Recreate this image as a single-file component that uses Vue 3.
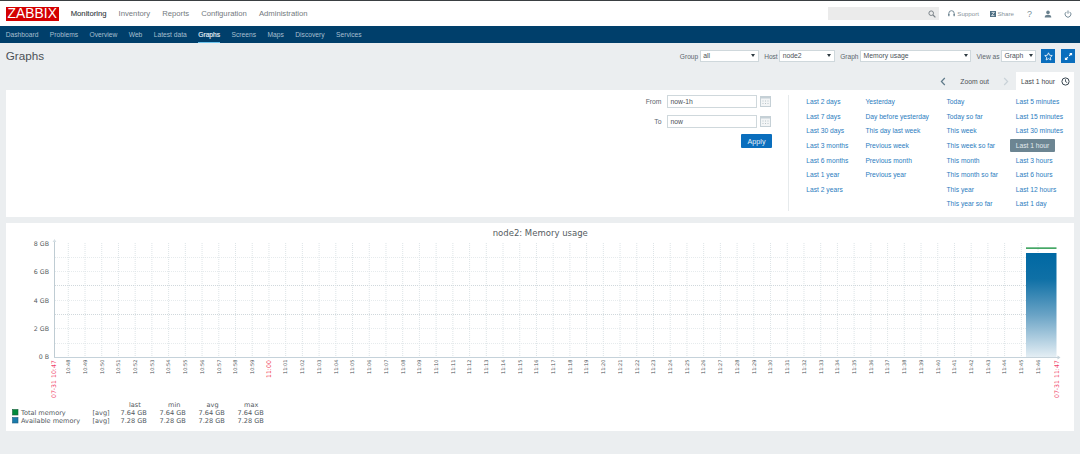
<script setup>
const mainNav = ['Monitoring', 'Inventory', 'Reports', 'Configuration', 'Administration']
const subNav = ['Dashboard', 'Problems', 'Overview', 'Web', 'Latest data', 'Graphs', 'Screens', 'Maps', 'Discovery', 'Services']
const linkCols = [
  ['Last 2 days', 'Last 7 days', 'Last 30 days', 'Last 3 months', 'Last 6 months', 'Last 1 year', 'Last 2 years'],
  ['Yesterday', 'Day before yesterday', 'This day last week', 'Previous week', 'Previous month', 'Previous year'],
  ['Today', 'Today so far', 'This week', 'This week so far', 'This month', 'This month so far', 'This year', 'This year so far'],
  ['Last 5 minutes', 'Last 15 minutes', 'Last 30 minutes', 'Last 1 hour', 'Last 3 hours', 'Last 6 hours', 'Last 12 hours', 'Last 1 day']
]
const pad = n => String(n).padStart(2, '0')
const ticks = []
for (let m = 48; m <= 106; m++) {
  const h = 10 + Math.floor(m / 60)
  ticks.push({ x: 68.3 + (m - 48) * 16.72, label: `${h}:${pad(m % 60)}`, red: m === 60 })
}
const hLines = [
  { y: 257.5, dark: false }, { y: 271.5, dark: false }, { y: 285.5, dark: true },
  { y: 300.5, dark: false }, { y: 314.5, dark: true }, { y: 328.5, dark: false }, { y: 343.5, dark: false }
]
const yLabels = [
  { y: 245.5, t: '8 GB' }, { y: 274, t: '6 GB' }, { y: 302.5, t: '4 GB' }, { y: 330.5, t: '2 GB' }, { y: 359, t: '0 B' }
]
const statCols = [
  { x: 120.5, head: 'last', hx: 129, a: '7.64 GB', b: '7.28 GB' },
  { x: 159.5, head: 'min', hx: 168, a: '7.64 GB', b: '7.28 GB' },
  { x: 198.5, head: 'avg', hx: 206.5, a: '7.64 GB', b: '7.28 GB' },
  { x: 237.5, head: 'max', hx: 244, a: '7.64 GB', b: '7.28 GB' }
]
</script>

<template>
  <div class="page">
    <header class="top">
      <div class="logo">ZABBIX</div>
      <nav class="main-nav">
        <a v-for="(n, i) in mainNav" :key="n" :class="{ on: i === 0 }">{{ n }}</a>
      </nav>
      <div class="tools">
        <div class="search">
          <svg width="8" height="8" viewBox="0 0 8 8"><circle cx="3.2" cy="3.2" r="2.3" fill="none" stroke="#7b8389" stroke-width="1"/><path d="M5 5l2.4 2.4" stroke="#7b8389" stroke-width="1.2"/></svg>
        </div>
        <a class="tool support">
          <svg width="7" height="8" viewBox="0 0 7 8"><path d="M.8 5V3.4a2.7 2.7 0 0 1 5.4 0V5" fill="none" stroke="#69808d" stroke-width=".9"/><rect x=".2" y="3.9" width="1.3" height="2.3" fill="#69808d"/><rect x="5.5" y="3.9" width="1.3" height="2.3" fill="#69808d"/></svg>
          Support
        </a>
        <a class="tool share">
          <svg width="6" height="6" viewBox="0 0 6 6"><rect width="6" height="6" fill="#4f6f83"/><path d="M1.6 1.4h2.8L1.6 4.6h2.8" fill="none" stroke="#fff" stroke-width=".7"/></svg>
          Share
        </a>
        <span class="help">?</span>
        <svg class="user" width="8" height="8" viewBox="0 0 8 8"><circle cx="4" cy="2.4" r="1.8" fill="#69808d"/><path d="M.7 7.4c0-2 1.5-2.6 3.3-2.6s3.3.6 3.3 2.6z" fill="#69808d"/></svg>
        <svg class="power" width="8" height="8" viewBox="0 0 8 8"><path d="M2.3 1.9a2.9 2.9 0 1 0 3.4 0" fill="none" stroke="#69808d" stroke-width=".9"/><path d="M4 .5v3.2" stroke="#69808d" stroke-width=".9"/></svg>
      </div>
    </header>

    <nav class="sub-nav">
      <a v-for="n in subNav" :key="n" :class="{ on: n === 'Graphs' }">{{ n }}</a>
    </nav>

    <main class="content">
      <div class="title-row">
        <h1>Graphs</h1>
        <div class="controls">
          <label>Group</label><div class="sel w-group">all</div>
          <label>Host</label><div class="sel w-host">node2</div>
          <label>Graph</label><div class="sel w-graph">Memory usage</div>
          <label>View as</label><div class="sel w-view">Graph</div>
          <button class="icon-btn star">
            <svg width="9" height="9" viewBox="0 0 10 10"><path d="M5 .9l1.25 2.7 2.95.35-2.2 2 .6 2.9L5 7.4 2.4 8.85l.6-2.9-2.2-2 2.95-.35z" fill="none" stroke="#fff" stroke-width=".9"/></svg>
          </button>
          <button class="icon-btn expand">
            <svg width="9" height="9" viewBox="0 0 10 10"><path d="M5.8 1h3.2v3.2L7.900 3.100 6.300 4.700 5.300 3.700 6.900 2.100zM4.200 9H1V5.800l1.100 1.100 1.600-1.600 1 1-1.600 1.600z" fill="#fff"/></svg>
          </button>
        </div>
      </div>

      <div class="time-row">
        <svg class="chev" width="6" height="9" viewBox="0 0 6 9"><path d="M4.8 1L1.4 4.5l3.4 3.5" fill="none" stroke="#5f7a8a" stroke-width="1.2"/></svg>
        <span class="zoom-out">Zoom out</span>
        <svg class="chev next" width="6" height="9" viewBox="0 0 6 9"><path d="M1.2 1l3.4 3.5L1.2 8" fill="none" stroke="#c9d2d8" stroke-width="1.2"/></svg>
        <div class="time-tab">
          <span>Last 1 hour</span>
          <svg width="9" height="9" viewBox="0 0 9 9"><circle cx="4.5" cy="4.5" r="3.6" fill="none" stroke="#384650" stroke-width="1"/><path d="M4.5 2.3v2.3l1.7 1" fill="none" stroke="#384650" stroke-width=".9"/></svg>
        </div>
      </div>

      <section class="filter">
        <form class="range" @submit.prevent>
          <div class="range-row">
            <label>From</label><div class="txt">now-1h</div>
            <svg class="cal" width="11" height="11" viewBox="0 0 11 11"><rect x=".5" y=".5" width="10" height="10" fill="#f3f5f6" stroke="#c5d0d6"/><rect x=".5" y=".5" width="10" height="2" fill="#c5d0d6"/><path d="M2.5 5h1M5 5h1M7.500 5h1M2.500 7.500h1M5 7.500h1M7.500 7.500h1" stroke="#a9b7bf" stroke-width=".8"/></svg>
          </div>
          <div class="range-row second">
            <label>To</label><div class="txt">now</div>
            <svg class="cal" width="11" height="11" viewBox="0 0 11 11"><rect x=".5" y=".5" width="10" height="10" fill="#f3f5f6" stroke="#c5d0d6"/><rect x=".5" y=".5" width="10" height="2" fill="#c5d0d6"/><path d="M2.5 5h1M5 5h1M7.500 5h1M2.500 7.500h1M5 7.500h1M7.500 7.500h1" stroke="#a9b7bf" stroke-width=".8"/></svg>
          </div>
          <button class="apply">Apply</button>
        </form>
        <div class="links">
          <ul v-for="(col, i) in linkCols" :key="i" :class="'c' + i">
            <li v-for="l in col" :key="l"><a :class="{ sel1: l === 'Last 1 hour' }">{{ l }}</a></li>
          </ul>
        </div>
      </section>

      <section class="graph">
        <svg class="chart" width="1068" height="208" viewBox="6 223 1068 208">
          <defs>
            <linearGradient id="area" x1="0" y1="0" x2="0" y2="1">
              <stop offset="0" stop-color="#0068a3"/>
              <stop offset=".25" stop-color="#0f70a6"/>
              <stop offset=".6" stop-color="#6ba4c6"/>
              <stop offset="1" stop-color="#e4eef4"/>
            </linearGradient>
          </defs>
          <text class="g-title" x="492.700" y="236">node2: Memory usage</text>

          <line v-for="h in hLines" :key="h.y" x1="55" x2="1056" :y1="h.y" :y2="h.y" :stroke="h.dark ? '#d0d8dc' : '#e6ebed'" stroke-width="1" stroke-dasharray="1 1"/>
          <line v-for="t in ticks" :key="'v' + t.x" :x1="t.x" :x2="t.x" y1="243" y2="357" stroke="#dde4e7" stroke-width="1" stroke-dasharray="1 1"/>

          <rect x="1026" y="253" width="30.500" height="104" fill="url(#area)"/>
          <rect x="1026" y="247.300" width="30.500" height="1.700" fill="#45a766"/>

          <line x1="54.500" x2="54.500" y1="241" y2="357.500" stroke="#bfccd3" stroke-width="1"/>
          <line x1="54" x2="1058" y1="357.500" y2="357.500" stroke="#c5d2da" stroke-width="1"/>
          <path d="M52.600 242l1.900-3 1.900 3z" fill="#d5dfe4"/>
          <path d="M1057.500 355.600l3 1.900-3 1.900z" fill="#c5d2da"/>

          <text v-for="l in yLabels" :key="l.t" class="y-lab" x="49" :y="l.y" text-anchor="end">{{ l.t }}</text>

          <text class="tick edge" transform="translate(56 398) rotate(-90)">07-31 10:47</text>
          <text v-for="t in ticks" :key="'l' + t.x" :class="['tick', t.red ? 'hour' : '']" :transform="`translate(${t.x + 1.8} ${t.red ? 378 : 374}) rotate(-90)`">{{ t.label }}</text>
          <text class="tick edge" transform="translate(1059 398) rotate(-90)">07-31 11:47</text>

          <rect x="12.500" y="409.500" width="5.500" height="5.500" fill="#008a3c" stroke="#16603a" stroke-width=".6"/>
          <rect x="12.500" y="417.500" width="5.500" height="5.500" fill="#1a7cab" stroke="#1d5d80" stroke-width=".6"/>
          <text class="leg" x="21" y="414.500">Total memory</text>
          <text class="leg" x="21" y="422.500">Available memory</text>
          <text class="leg" x="92.500" y="414.500">[avg]</text>
          <text class="leg" x="92.500" y="422.500">[avg]</text>
          <g v-for="c in statCols" :key="c.head">
            <text class="leg" :x="c.hx" y="406.500">{{ c.head }}</text>
            <text class="leg" :x="c.x" y="414.500">{{ c.a }}</text>
            <text class="leg" :x="c.x" y="422.500">{{ c.b }}</text>
          </g>
        </svg>
      </section>
    </main>
  </div>
</template>

<style>
html, body { margin: 0; background: #ebeef0; }
</style>

<style scoped>
.page { width: 1080px; height: 454px; overflow: hidden; background: #ebeef0; font-family: "Liberation Sans", Arial, sans-serif; font-size: 6.800px; color: #4b5157; }
a { cursor: pointer; }
.top { height: 26px; box-sizing: border-box; border-top: 1.500px solid #3a3f42; background: #fff; display: flex; align-items: center; }
.logo { margin-left: 5.500px; width: 53.500px; height: 14px; background: #d40000; color: #fff; font-size: 13.800px; line-height: 14.500px; text-align: center; letter-spacing: .1px; }
.main-nav { display: flex; margin-left: 11.700px; gap: 12px; font-size: 7.700px; color: #73797e; }
.main-nav a { position: relative; }
.main-nav a.on { color: #33393d; -webkit-text-stroke: .1px #33393d; }
.main-nav a.on::after { content: ""; position: absolute; left: 14.500px; bottom: -10.500px; border: 3.500px solid transparent; border-top: 0; border-bottom: 3.500px solid #003f6b; }
.tools { margin-left: auto; display: flex; align-items: center; color: #8a949b; height: 100%; }
.search { width: 111px; height: 13.500px; background: #ebebeb; display: flex; align-items: center; justify-content: flex-end; padding-right: 3px; box-sizing: border-box; }
.tool { display: flex; align-items: center; gap: 2px; font-size: 6.200px; }
.support { margin-left: 9px; }
.share { margin-left: 11px; gap: 1.500px; }
.help { margin-left: 13px; font-size: 9px; color: #7d8f9a; }
.user { margin-left: 12px; }
.power { margin-left: 12px; margin-right: 8px; }

.sub-nav { height: 17px; background: #003f6b; display: flex; gap: 11.400px; padding-left: 5.700px; color: #a7bfd0; font-size: 6.700px; line-height: 17px; }
.sub-nav a { height: 16px; }
.sub-nav a.on { color: #e8f1f6; border-bottom: 1px solid #6cc4ee; -webkit-text-stroke: .15px #e8f1f6; }

.content { padding: 0 6px; }
.title-row { height: 26px; display: flex; align-items: center; justify-content: space-between; margin-left: -.300px; margin-right: -1px; }
h1 { margin: -1.500px 0 0; font-size: 11.700px; font-weight: 400; color: #4b5157; }
.controls { display: flex; align-items: center; }
.controls label { margin-right: 1.500px; color: #5c666d; font-size: 6.600px; }
.sel { position: relative; height: 12.500px; line-height: 10.500px; box-sizing: border-box; background: #fff; border: 1px solid #cfd8dc; padding-left: 2.500px; color: #4b5157; margin-right: 5.500px; }
.sel::after { content: ""; position: absolute; right: 2.500px; top: 3.700px; border: 2px solid transparent; border-top: 3px solid #2f3b42; border-bottom: 0; }
.w-group { width: 59px; }
.w-host { width: 55.500px; }
.w-graph { width: 111px; }
.w-view { width: 35px; margin-right: 5px; }
.icon-btn { width: 14px; height: 13.500px; padding: 0; display: flex; align-items: center; justify-content: center; border: 0; background: #0a6ebd; }
.star { margin-right: 6px; }

.time-row { height: 18px; margin-top: 3px; display: flex; align-items: center; justify-content: flex-end; color: #4b5157; }
.zoom-out { margin-left: 14px; }
.chev.next { margin-left: 14px; margin-right: 7px; }
.time-tab { width: 58px; height: 18px; background: #fff; display: flex; align-items: center; padding-left: 5px; box-sizing: border-box; gap: 6px; color: #3f474c; }

.filter { height: 127px; background: #fff; display: flex; margin-bottom: 6px; box-sizing: border-box; padding-top: 5px; }
.range { width: 766px; margin-right: 16px; display: flex; flex-direction: column; align-items: flex-end; }
.range-row { display: flex; align-items: center; height: 13px; width: 766px; justify-content: flex-end; padding-right: 1.500px; box-sizing: border-box; }
.range-row.second { margin-top: 7px; }
.range-row label { color: #5c666d; margin-right: 5px; }
.txt { width: 90px; height: 13.500px; box-sizing: border-box; border: 1px solid #cfd8dc; background: #fff; line-height: 11.500px; padding-left: 3px; color: #4b5157; }
.cal { margin-left: 3px; }
.apply { width: 31px; height: 14px; margin-top: 6px; border: 0; border-radius: 1px; padding: 0; background: #0a6ebd; color: #e6f1f8; font: 7.200px "Liberation Sans", Arial, sans-serif; }
.links { border-left: 1px solid #e6eaec; height: 116px; display: flex; padding-left: 17.300px; font-size: 6.700px; }
.links ul { list-style: none; margin: 0; padding: 0; color: #2b7cc0; }
.links li { height: 14.650px; line-height: 14px; white-space: nowrap; }
.c0 { width: 59.100px; }
.c1 { width: 81px; }
.c2 { width: 69.400px; }
.sel1 { display: inline-block; margin-left: -5.500px; padding: 0 5.500px; height: 13px; line-height: 13px; background: #6c8592; color: #e4ebef; border-radius: 1px; }

.graph { height: 208px; background: #fff; }
.chart { display: block; }
.g-title { font: 8.500px "DejaVu Sans", sans-serif; fill: #555c61; }
.y-lab { font: 6.300px "DejaVu Sans", sans-serif; fill: #555c61; }
.tick { font: 5px "DejaVu Sans", sans-serif; fill: #4b5257; }
.tick.hour { font-size: 6.200px; fill: #f0304f; }
.tick.edge { font-size: 6.200px; fill: #f0406a; }
.leg { font: 6.550px "DejaVu Sans", sans-serif; fill: #51585d; }
</style>
